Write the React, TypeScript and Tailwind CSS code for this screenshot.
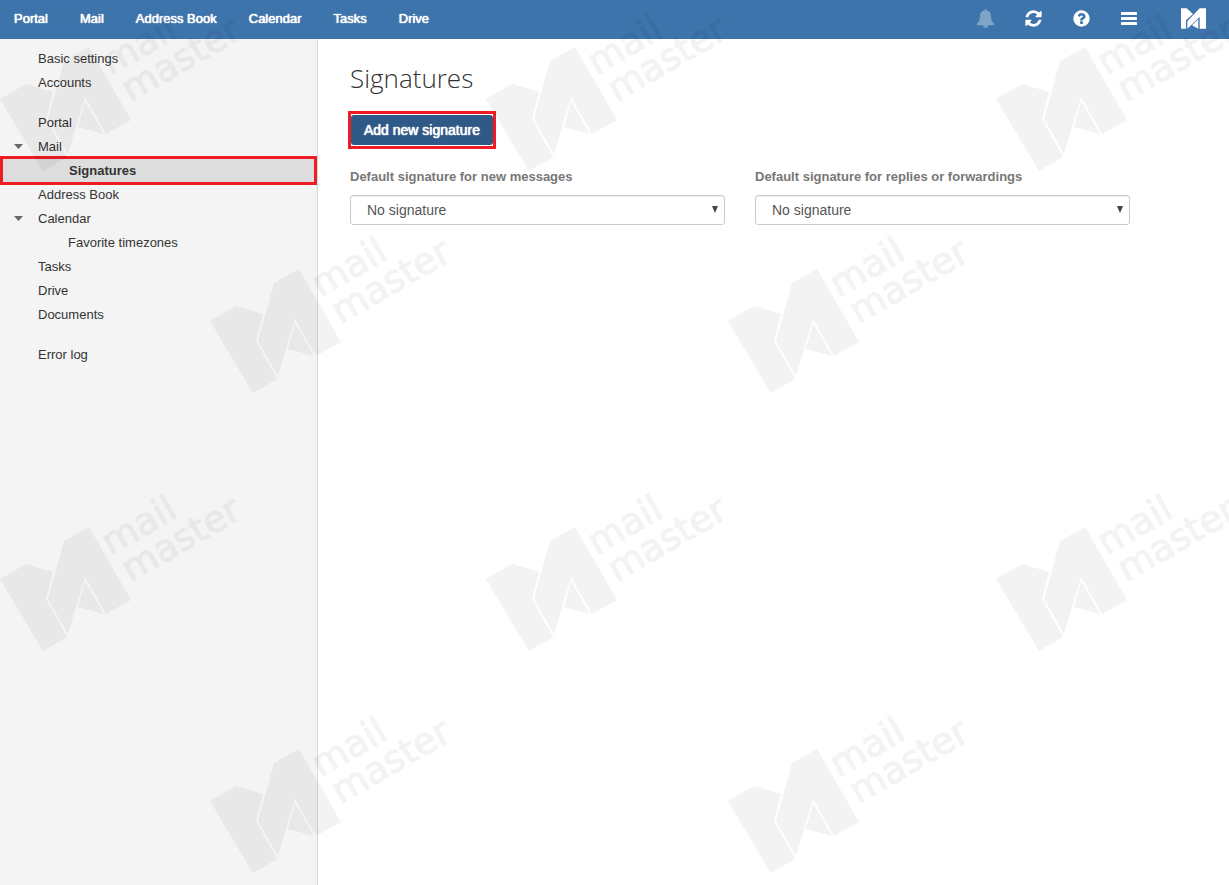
import { useState } from "react";

interface NavItem {
  label: string;
  child?: boolean;
  expandable?: boolean;
}

const topLinks: string[] = ["Portal", "Mail", "Address Book", "Calendar", "Tasks", "Drive"];

const sidebarGroups: NavItem[][] = [
  [{ label: "Basic settings" }, { label: "Accounts" }],
  [
    { label: "Portal" },
    { label: "Mail", expandable: true },
    { label: "Signatures", child: true },
    { label: "Address Book" },
    { label: "Calendar", expandable: true },
    { label: "Favorite timezones", child: true },
    { label: "Tasks" },
    { label: "Drive" },
    { label: "Documents" },
  ],
  [{ label: "Error log" }],
];

// Top left corner of every watermark on the page
const watermarks = [
  [-6, 0],
  [480, 0],
  [990, 0],
  [204, 222],
  [722, 222],
  [-6, 480],
  [480, 480],
  [990, 480],
  [204, 702],
  [722, 702],
];

const BellIcon = () => (
  <svg viewBox="0 0 1792 1792" className="size-[19px] fill-current" aria-hidden="true">
    <path d="M912 1696q0-16-16-16-59 0-101.5-42.5t-42.5-101.5q0-16-16-16t-16 16q0 73 51.5 124.5t124.5 51.5q16 0 16-16zm816-288q0 52-38 90t-90 38h-448q0 106-75 181t-181 75-181-75-75-181h-448q-52 0-90-38t-38-90q50-42 91-88t85-119.5 74.5-158.5 50-206 19.5-260q0-152 117-282.5t307-158.5q-8-19-8-39 0-40 28-68t68-28 68 28 28 68q0 20-8 39 190 28 307 158.5t117 282.5q0 139 19.5 260t50 206 74.5 158.5 85 119.5 91 88z" />
  </svg>
);

const RefreshIcon = () => (
  <svg viewBox="0 0 1792 1792" className="size-[19px] fill-current" aria-hidden="true">
    <path d="M1639 1056q0 5-1 7-64 268-268 434.5t-478 166.5q-146 0-282.5-55t-243.5-157l-129 129q-19 19-45 19t-45-19-19-45v-448q0-26 19-45t45-19h448q26 0 45 19t19 45-19 45l-137 137q71 66 161 102t187 36q134 0 250-65t186-179q11-17 53-117 8-23 30-23h192q13 0 22.5 9.5t9.5 22.5zm25-800v448q0 26-19 45t-45 19h-448q-26 0-45-19t-19-45 19-45l138-138q-148-137-349-137-134 0-250 65t-186 179q-11 17-53 117-8 23-30 23h-199q-13 0-22.5-9.5t-9.5-22.5v-7q65-268 270-434.5t480-166.5q146 0 284 55.5t245 156.5l130-129q19-19 45-19t45 19 19 45z" />
  </svg>
);

const HelpIcon = () => (
  <svg viewBox="0 0 1792 1792" className="size-[19px] fill-current" aria-hidden="true">
    <path d="M1024 1376v-192q0-14-9-23t-23-9h-192q-14 0-23 9t-9 23v192q0 14 9 23t23 9h192q14 0 23-9t9-23zm256-672q0-88-55.5-163t-138.5-116-170-41q-243 0-371 213-15 24 8 42l132 100q7 6 19 6 16 0 25-12 53-68 86-92 34-24 86-24 48 0 85.5 26t37.5 59q0 38-20 61t-68 45q-63 28-115.5 86.5t-52.5 125.5v36q0 14 9 23t23 9h192q14 0 23-9t9-23q0-19 21.5-49.5t54.5-49.5q32-18 49-28.5t46-35 44.5-48 28-60.5 12.5-81zm384 192q0 209-103 385.5t-279.5 279.5-385.5 103-385.5-103-279.5-279.5-103-385.5 103-385.5 279.5-279.5 385.5-103 385.5 103 279.5 279.5 103 385.5z" />
  </svg>
);

const MenuIcon = () => (
  <svg viewBox="0 0 16 15" className="h-[15px] w-4 fill-current" aria-hidden="true">
    <rect y="1" width="16" height="3" rx="0.5" />
    <rect y="6" width="16" height="3" rx="0.5" />
    <rect y="11" width="16" height="3" rx="0.5" />
  </svg>
);

const LogoIcon = () => (
  <svg viewBox="0 0 75 63" className="h-[21px] w-[25px] fill-current" aria-hidden="true">
    <path d="M0 1H17L36 18L15 37V62H0Z" />
    <path d="M56 1H75V62H56V27L19 62V40Z" />
    <path d="M33 52L52 34V62Z" />
  </svg>
);

const Watermark = ({ x, y }: { x: number; y: number }) => (
  <g transform={`translate(${x} ${y})`}>
    <path d="M6 99L32 84L59 92L52 119L73 157L49 171Z" />
    <path d="M70 61L95 47L137 120L112 134L91 97L74 154L54 119Z" />
    <path d="M91 101L110 134L84 127Z" />
    <g transform="rotate(-30 116 75)" className="stroke-black stroke-1">
      <text x="116" y="76">mail</text>
      <text x="120" y="109">master</text>
    </g>
  </g>
);

const Header = () => (
  <header className="flex h-[39px] items-center justify-between bg-[#3d74ab] pr-[23px] pb-0.5 pl-[14px] text-white">
    <nav
      className="flex gap-8 text-[13px] leading-5 [text-shadow:0_0_1px_#fff,0_0_1px_#fff]"
      aria-label="Applications"
    >
      {topLinks.map((link) => (
        <a key={link} href="#" className="whitespace-nowrap">
          {link}
        </a>
      ))}
    </nav>
    <div className="flex items-center">
      <button type="button" aria-label="Notifications" className="flex h-8 w-12 items-center justify-center text-white/35">
        <BellIcon />
      </button>
      <button type="button" aria-label="Refresh" className="flex h-8 w-12 items-center justify-center">
        <RefreshIcon />
      </button>
      <button type="button" aria-label="Help" className="flex h-8 w-12 items-center justify-center">
        <HelpIcon />
      </button>
      <button type="button" aria-label="Menu" className="flex h-8 w-12 items-center justify-center">
        <MenuIcon />
      </button>
      <a href="#" aria-label="Home" className="ml-7">
        <LogoIcon />
      </a>
    </div>
  </header>
);

const SidebarItem = ({ item, selected, onSelect }: { item: NavItem; selected: boolean; onSelect: () => void }) => {
  if (selected) {
    return (
      <li className="-mt-[3px] -mb-[2px]">
        <button
          type="button"
          onClick={onSelect}
          aria-current="page"
          className="block h-[29px] w-full border-[3px] border-[#ee1c25] bg-[#dddddd] pl-[66px] text-left font-bold"
        >
          {item.label}
        </button>
      </li>
    );
  }

  return (
    <li>
      <button type="button" onClick={onSelect} className="flex h-6 w-full items-center text-left">
        <span className={item.child ? "w-[68px]" : "flex w-[38px] pl-[14px]"}>
          {item.expandable && (
            <svg viewBox="0 0 9 6" className="h-[6px] w-[9px] fill-[#666666]" aria-hidden="true">
              <path d="M0 0H9L4.5 5Z" />
            </svg>
          )}
        </span>
        {item.label}
      </button>
    </li>
  );
};

const Sidebar = () => {
  const [selected, setSelected] = useState<string>("Signatures");

  return (
    <aside className="w-[318px] shrink-0 border-r border-[#d8d8d8] bg-[#f4f4f4] pt-2 text-[13px] text-[#333333]">
      <nav className="flex flex-col gap-4" aria-label="Settings">
        {sidebarGroups.map((group) => (
          <ul key={group[0].label}>
            {group.map((item) => (
              <SidebarItem
                key={item.label}
                item={item}
                selected={item.label === selected}
                onSelect={() => setSelected(item.label)}
              />
            ))}
          </ul>
        ))}
      </nav>
    </aside>
  );
};

const SignatureSelect = ({ id, label }: { id: string; label: string }) => (
  <div className="min-w-0 flex-1">
    <label htmlFor={id} className="block text-[13px] leading-5 font-bold text-[#777777]">
      {label}
    </label>
    <div className="relative mt-2">
      <select
        id={id}
        className="block h-[30px] w-full appearance-none rounded-[3px] border border-[#cccccc] bg-white px-4 text-sm text-[#555555] shadow-[inset_0_1px_1px_rgba(0,0,0,0.07)]"
      >
        <option>No signature</option>
      </select>
      <svg
        viewBox="0 0 6 7"
        className="pointer-events-none absolute top-[11px] right-[7px] h-[7px] w-[6px] fill-[#444444]"
        aria-hidden="true"
      >
        <path d="M0 0H6L3 7Z" />
      </svg>
    </div>
  </div>
);

const App = () => {
  return (
    <div className="relative flex min-h-screen flex-col bg-white font-['Liberation_Sans',Arial,sans-serif]">
      <Header />
      <div className="flex flex-1">
        <Sidebar />
        <main className="min-w-0 flex-1 px-8 pt-[21px]">
          <h1 className="font-['Open_Sans',sans-serif] text-[26px] leading-9 font-light text-[#333333]">Signatures</h1>
          <div className="mt-[15px] -ml-0.5 w-fit border-[3px] border-[#ee1c25] py-px">
            <button
              type="button"
              className="block h-[30px] rounded-[3px] bg-[#2f5a87] px-[13px] text-sm text-white [text-shadow:0_0_1px_#fff,0_0_1px_#fff]"
            >
              Add new signature
            </button>
          </div>
          <div className="mt-[18px] flex max-w-[780px] gap-[30px]">
            <SignatureSelect id="new-messages" label="Default signature for new messages" />
            <SignatureSelect id="replies" label="Default signature for replies or forwardings" />
          </div>
        </main>
      </div>

      {/* Watermarks lie over the whole page */}
      <svg
        className="pointer-events-none absolute inset-0 size-full fill-black font-['DejaVu_Sans',sans-serif] text-[37px] opacity-[0.045]"
        aria-hidden="true"
      >
        {watermarks.map(([x, y]) => (
          <Watermark key={`${x}-${y}`} x={x} y={y} />
        ))}
      </svg>
    </div>
  );
};

export default App;
